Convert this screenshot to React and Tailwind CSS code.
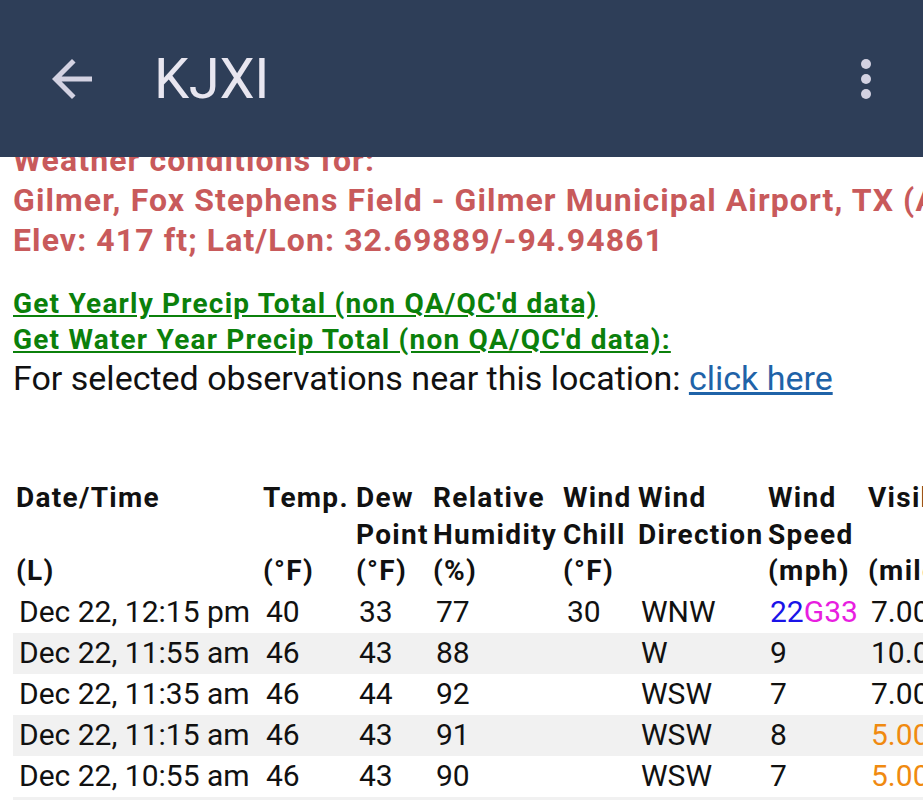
import React from 'react'

const rows = [
  { dt: 'Dec 22, 12:15 pm', t: '40', dp: '33', rh: '77', wc: '30', dir: 'WNW', ws: '22', g: '33', vis: '7.00', visOrange: false },
  { dt: 'Dec 22, 11:55 am', t: '46', dp: '43', rh: '88', wc: '', dir: 'W', ws: '9', g: '', vis: '10.00', visOrange: false },
  { dt: 'Dec 22, 11:35 am', t: '46', dp: '44', rh: '92', wc: '', dir: 'WSW', ws: '7', g: '', vis: '7.00', visOrange: false },
  { dt: 'Dec 22, 11:15 am', t: '46', dp: '43', rh: '91', wc: '', dir: 'WSW', ws: '8', g: '', vis: '5.00', visOrange: true },
  { dt: 'Dec 22, 10:55 am', t: '46', dp: '43', rh: '90', wc: '', dir: 'WSW', ws: '7', g: '', vis: '5.00', visOrange: true },
  { dt: 'Dec 22, 10:35 am', t: '46', dp: '43', rh: '90', wc: '', dir: 'WSW', ws: '8', g: '', vis: '5.00', visOrange: true },
]

const headers = [
  ['Date/Time', '', '(L)'],
  ['Temp.', '', '(°F)'],
  ['Dew', 'Point', '(°F)'],
  ['Relative', 'Humidity', '(%)'],
  ['Wind', 'Chill', '(°F)'],
  ['Wind', 'Direction', ''],
  ['Wind', 'Speed', '(mph)'],
  ['Visibility', '', '(miles)'],
]

const cols = 'grid grid-cols-[247px_93px_77px_130px_75px_130px_100px_160px]'

export default function App() {
  return (
    <div className="w-[923px] h-[800px] overflow-hidden bg-white flex flex-col" style={{ fontFamily: 'Roboto, "Noto Sans", sans-serif' }}>
      {/* App bar */}
      <div className="h-[157px] shrink-0 bg-[#2e3e58] flex items-center relative z-10">
        <svg viewBox="0 0 24 24" className="w-[60px] h-[60px] ml-[42px] shrink-0" fill="#d3d2e2">
          <path d="M20 11H7.83l5.59-5.59L12 4l-8 8 8 8 1.41-1.41L7.83 13H20v-2z" />
        </svg>
        <div className="ml-[52px] text-[56px] leading-none text-[#e8e6f0] tracking-[-0.3px]">KJXI</div>
        <svg viewBox="0 0 24 24" className="w-[60px] h-[60px] ml-auto mr-[27px] shrink-0" fill="#d3d2e2">
          <circle cx="12" cy="6" r="2" />
          <circle cx="12" cy="12" r="2" />
          <circle cx="12" cy="18" r="2" />
        </svg>
      </div>

      {/* Scrolled page content */}
      <div className="flex-1 overflow-hidden">
        <div className="-mt-[17px] pl-[13px] whitespace-nowrap">
          <div className="text-[32px] leading-[40px] font-bold text-[#c85a5b] tracking-[1.1px]">
            <div>Weather conditions for:</div>
            <div>Gilmer, Fox Stephens Field - Gilmer Municipal Airport, TX (AWOS)</div>
            <div>Elev: 417 ft; Lat/Lon: 32.69889/-94.94861</div>
          </div>

          <div className="mt-[26px] text-[28px] leading-[36px] font-bold text-[#0b800b] tracking-[1.2px]">
            <div><span className="underline">Get Yearly Precip Total (non QA/QC'd data)</span></div>
            <div><span className="underline">Get Water Year Precip Total (non QA/QC'd data):</span></div>
          </div>
          <div className="text-[34px] leading-[40px] text-[#111]">
            For selected observations near this location: <span className="underline text-[#1f63a8]">click here</span>
          </div>

          {/* Observations table */}
          <div className="mt-[82px] w-[1200px]">
            <div className={`${cols} text-[28px] leading-[36.5px] font-bold text-[#111] tracking-[1.3px]`}>
              {headers.map((h, i) => (
                <div key={i} className="pl-[3px]">
                  <div>{h[0] || '\u00a0'}</div>
                  <div>{h[1] || '\u00a0'}</div>
                  <div>{h[2] || '\u00a0'}</div>
                </div>
              ))}
            </div>
            <div className="mt-[2px]">
              {rows.map((r, i) => (
                <div key={i} className={`${cols} h-[41px] items-center text-[30px] leading-none text-[#111] ${i % 2 === 1 ? 'bg-[#f1f1f1]' : ''}`}>
                  <div className="pl-[6px]">{r.dt}</div>
                  <div className="pl-[6px]">{r.t}</div>
                  <div className="pl-[6px]">{r.dp}</div>
                  <div className="pl-[6px]">{r.rh}</div>
                  <div className="pl-[7px]">{r.wc}</div>
                  <div className="pl-[6px]">{r.dir}</div>
                  <div className="pl-[5px]">
                    {r.g ? (
                      <>
                        <span className="text-[#1a14e8]">{r.ws}</span>
                        <span className="text-[#e81ee0]">G{r.g}</span>
                      </>
                    ) : r.ws}
                  </div>
                  <div className={`pl-[6px] ${r.visOrange ? 'text-[#f08a10]' : ''}`}>{r.vis}</div>
                </div>
              ))}
            </div>
          </div>
        </div>
      </div>
    </div>
  )
}
